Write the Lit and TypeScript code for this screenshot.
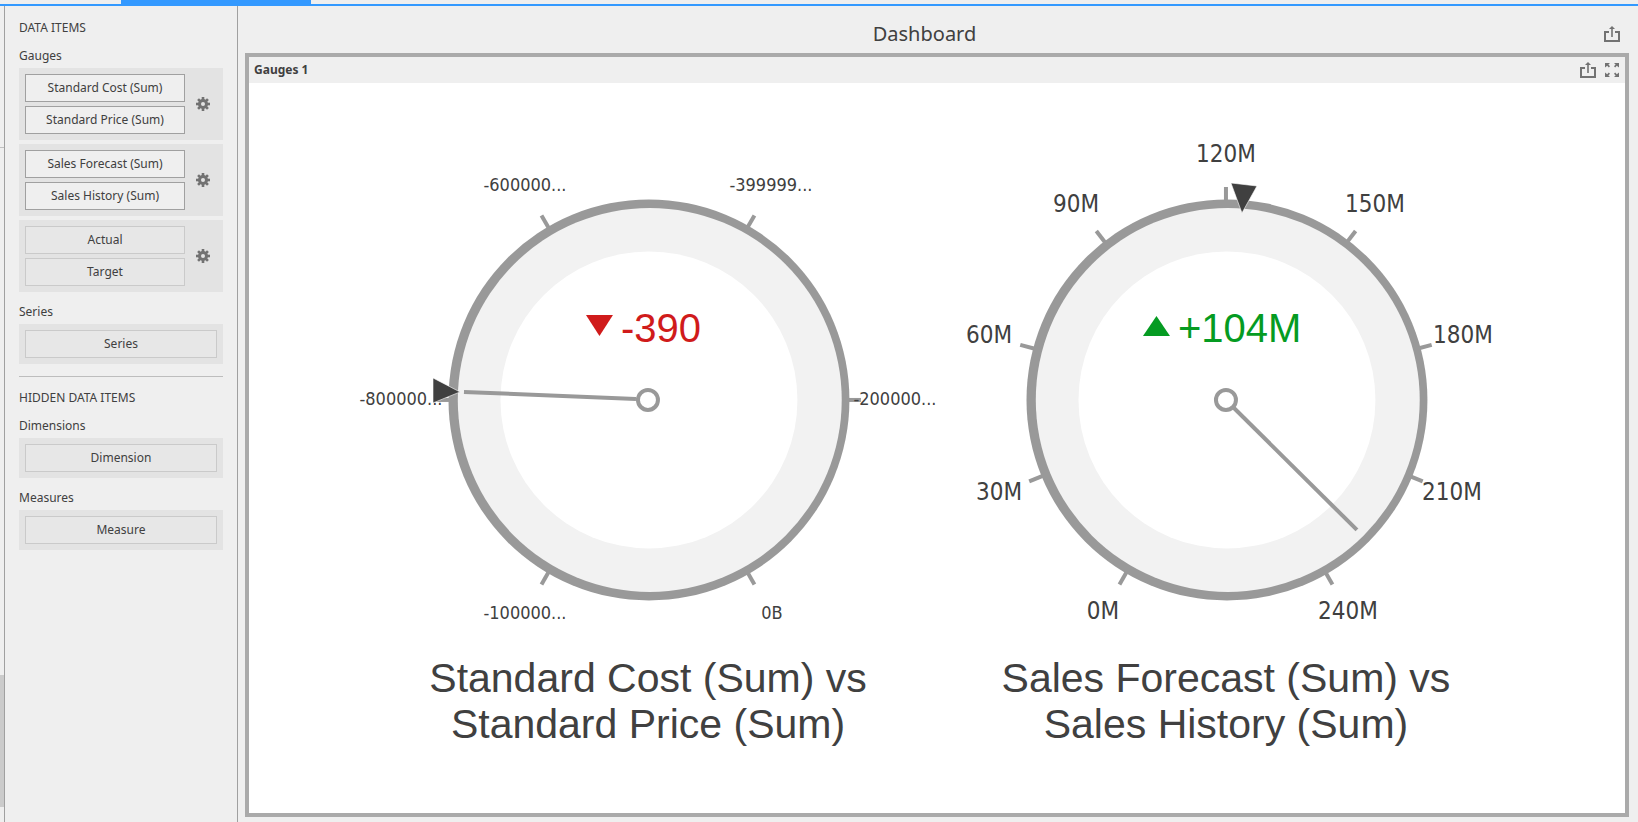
import { LitElement, html, svg, css } from "lit";
import { customElement, property } from "lit/decorators.js";

const UI_FONT = css`"Segoe UI", "Noto Sans", "Open Sans", sans-serif`;

interface Label { text: string; x: number; y: number; }
interface GaugeSpec {
  caption: string;
  delta: string;
  up: boolean;
  valueX: number;
  labelSize: string;
  ticks: number[];
  labels: Label[];
  needle: [number, number, number, number];
  marker: string;
}

// Centre of every dial inside the 578 x 488 drawing
const CX = 289;
const CY = 260;

const gauges: GaugeSpec[] = [
  {
    caption: "Standard Cost (Sum) vs Standard Price (Sum)",
    delta: "-390",
    up: false,
    valueX: 262,
    labelSize: "small",
    ticks: [-150, -90, -30, 30, 90, 150],
    labels: [
      { text: "-100000...", x: 166, y: 479 },
      { text: "-800000...", x: 42, y: 265 },
      { text: "-600000...", x: 166, y: 51 },
      { text: "-399999...", x: 412, y: 51 },
      { text: "-200000...", x: 536, y: 265 },
      { text: "0B", x: 413, y: 479 },
    ],
    needle: [277, 259, 105, 252],
    marker: "74,238 74,263 101,252",
  },
  {
    caption: "Sales Forecast (Sum) vs Sales History (Sum)",
    delta: "+104M",
    up: true,
    valueX: 241,
    labelSize: "large",
    ticks: [-150, -112.5, -75, -37.5, 0, 37.5, 75, 112.5, 150],
    labels: [
      { text: "0M", x: 166, y: 479 },
      { text: "30M", x: 62, y: 360 },
      { text: "60M", x: 52, y: 203 },
      { text: "90M", x: 139, y: 72 },
      { text: "120M", x: 289, y: 22 },
      { text: "150M", x: 438, y: 72 },
      { text: "180M", x: 526, y: 203 },
      { text: "210M", x: 515, y: 360 },
      { text: "240M", x: 411, y: 479 },
    ],
    needle: [297, 268, 420, 390],
    marker: "294,43 320,46 305,73",
  },
];

@customElement("delta-gauge")
export class DeltaGauge extends LitElement {
  @property({ attribute: false }) spec!: GaugeSpec;

  static styles = css`
    :host { display: block; flex: 1 1 0; min-width: 0; }
    .gauge { margin: 0; display: flex; flex-direction: column; }
    .dial { display: block; width: 100%; height: auto; overflow: visible; }
    .caption {
      margin-top: 27px; padding: 0 48px; text-align: center;
      font: 41px/46px "Liberation Sans", Arial, sans-serif; color: #404040;
    }
    .label {
      font-family: Tahoma, "DejaVu Sans Condensed", "Noto Sans", sans-serif;
      fill: #404040; text-anchor: middle;
    }
    .small { font-size: 18px; }
    .large { font-size: 24px; }
    .value { font: 40px "Liberation Sans", Arial, sans-serif; }
    .up { fill: #059b22; }
    .down { fill: #d01b1b; }
    .tick, .needle { stroke: #999; stroke-width: 4; }
    .rim { fill: #999; }
    .band { fill: #f2f2f2; }
    .face { fill: #fff; }
    .hub { fill: #fff; stroke: #999; stroke-width: 4; }
    .marker { fill: #404040; stroke: #fff; stroke-width: 1; stroke-opacity: 0.6; }
  `;

  render() {
    const g = this.spec;
    const tone = g.up ? "up" : "down";
    const left = g.up ? 206 : 227;
    const arrow = g.up
      ? `${left},196 ${left + 27},196 ${left + 13.5},176`
      : `${left},175 ${left + 27},175 ${left + 13.5},196`;
    return html`
      <figure class="gauge">
        <svg class="dial" viewBox="0 1 578 488" role="img" aria-label=${g.caption}>
          ${g.ticks.map((a) => svg`<line class="tick" x1=${CX} x2=${CX} y1=${CY - 213} y2=${CY - 195}
              transform="rotate(${a} ${CX} ${CY})"/>`)}
          <circle class="rim" cx="290" cy=${CY} r="200.5"/>
          <circle class="band" cx="290.8" cy=${CY} r="192"/>
          <circle class="face" cx="290" cy=${CY} r="148.5"/>
          ${g.labels.map((l) => svg`<text class="label ${g.labelSize}" x=${l.x} y=${l.y}>${l.text}</text>`)}
          <line class="needle" x1=${g.needle[0]} y1=${g.needle[1]} x2=${g.needle[2]} y2=${g.needle[3]}/>
          <circle class="hub" cx=${CX} cy=${CY} r="10"/>
          <polygon class="marker" points=${g.marker}/>
          <polygon class=${tone} points=${arrow}/>
          <text class="value ${tone}" x=${g.valueX} y="202">${g.delta}</text>
        </svg>
        <figcaption class="caption">${g.caption}</figcaption>
      </figure>
    `;
  }
}

const exportIcon = svg`<svg class="icon" viewBox="0 0 16 16" aria-hidden="true">
  <path d="M5 6H1v9h14V6h-4" fill="none" stroke="#727272" stroke-width="2"/>
  <path d="M8 11V2" fill="none" stroke="#727272" stroke-width="1.600"/>
  <path d="M8 0l3 3H5z" fill="#727272"/></svg>`;

const expandIcon = svg`<svg class="icon" viewBox="0 0 16 16" aria-hidden="true">
  <g fill="#727272">
    <path d="M1 1h5L4.400 2.600 6 4.200 4.800 5.400 3.200 3.800 1 5.500z"/>
    <path d="M15 1h-5l1.600 1.600L10 4.200l1.200 1.200 1.600-1.600L15 5.500z"/>
    <path d="M1 15h5l-1.600-1.600L6 11.800l-1.200-1.200-1.600 1.600L1 10.500z"/>
    <path d="M15 15h-5l1.600-1.600-1.600-1.600 1.200-1.200 1.600 1.600L15 10.500z"/>
  </g></svg>`;

const gearIcon = svg`<svg class="gear" viewBox="0 0 14 14" aria-hidden="true">
  <g fill="#727272">
    ${[0, 45, 90, 135].map((a) => svg`<rect x="5.700" y="0" width="2.600" height="14" transform="rotate(${a} 7 7)"/>`)}
    <circle cx="7" cy="7" r="5"/>
  </g>
  <circle cx="7" cy="7" r="2" fill="#e3e3e3"/></svg>`;

@customElement("app-root")
export class AppRoot extends LitElement {
  static styles = css`
    :host {
      display: flex; flex-direction: column; min-height: 100vh; box-sizing: border-box;
      background: #efefef; color: #404040; font: 12px/24px ${UI_FONT};
    }
    * { box-sizing: border-box; }
    button { font: inherit; color: inherit; margin: 0; cursor: pointer; }
    .tabs { height: 6px; border-bottom: 2px solid #3399ff; padding-left: 121px; }
    .tab { width: 190px; height: 4px; background: #3399ff; }
    .workspace { flex: 1; display: flex; }
    .rail { width: 5px; border-right: 1px solid #a0a0a0; display: flex; flex-direction: column; }
    .rail-line { height: 142px; border-bottom: 1px solid #c0c0c0; }
    .rail-space { flex: 1; }
    .thumb { height: 132px; background: #cbcbcb; margin-bottom: 15px; }
    .sidebar { width: 233px; padding: 10px 14px; border-right: 1px solid #a0a0a0; }
    h2, h3, h1 { margin: 0; font-size: 12px; font-weight: 400; }
    .section-title { margin-bottom: 4px; }
    .slots { display: flex; flex-direction: column; gap: 4px; margin-bottom: 8px; }
    .group { display: flex; background: #e3e3e3; padding: 6px; }
    .items { flex: 1; display: flex; flex-direction: column; gap: 4px; }
    .item {
      height: 28px; width: 100%; padding: 0; line-height: 24px;
      background: #efefef; border: 1px solid #a0a0a0;
    }
    .item.empty { background: #e7e7e7; border-color: #cacaca; }
    .options { width: 32px; border: 0; background: none; padding: 0 0 0 4px; display: grid; place-items: center; }
    .gear { display: block; width: 14px; height: 14px; }
    .divider { border: 0; border-top: 1px solid #bdbdbd; margin: 12px 0 9px; }
    .main { flex: 1; min-width: 0; display: flex; flex-direction: column; padding: 0 9px 5px 7px; }
    .title-bar { height: 47px; display: flex; align-items: center; padding: 8px 9px 0 0; }
    .title-bar h1 { flex: 1; text-align: center; font-size: 20px; line-height: 28px; }
    .icon-button { border: 0; background: none; padding: 0; display: block; width: 16px; height: 16px; }
    .icon { display: block; width: 16px; height: 16px; }
    .panel { flex: 1; display: flex; flex-direction: column; border: 4px solid #aaa; background: #fff; }
    .panel-head { height: 26px; display: flex; align-items: center; gap: 8px; padding: 0 5px; background: #efefef; }
    .panel-head h2 { flex: 1; font-weight: 700; }
    .gauges { flex: 1; display: flex; align-items: center; padding: 0 8% 8px; }
  `;

  private slot_(name: string, empty = false) {
    return html`<button class="item ${empty ? "empty" : ""}">${name}</button>`;
  }

  private group(names: string[], empty = false) {
    return html`<div class="group">
      <div class="items">${names.map((n) => this.slot_(n, empty))}</div>
      <button class="options" aria-label="Options">${gearIcon}</button>
    </div>`;
  }

  private single(title: string, name: string) {
    return html`<h3>${title}</h3>
      <div class="slots"><div class="group"><div class="items">${this.slot_(name, true)}</div></div></div>`;
  }

  render() {
    return html`
      <div class="tabs"><div class="tab"></div></div>
      <div class="workspace">
        <div class="rail"><div class="rail-line"></div><div class="rail-space"></div><div class="thumb"></div></div>
        <aside class="sidebar">
          <h2 class="section-title">DATA ITEMS</h2>
          <h3>Gauges</h3>
          <div class="slots">
            ${this.group(["Standard Cost (Sum)", "Standard Price (Sum)"])}
            ${this.group(["Sales Forecast (Sum)", "Sales History (Sum)"])}
            ${this.group(["Actual", "Target"], true)}
          </div>
          ${this.single("Series", "Series")}
          <hr class="divider" />
          <h2 class="section-title">HIDDEN DATA ITEMS</h2>
          ${this.single("Dimensions", "Dimension")}
          ${this.single("Measures", "Measure")}
        </aside>
        <main class="main">
          <header class="title-bar">
            <h1>Dashboard</h1>
            <button class="icon-button" aria-label="Export dashboard">${exportIcon}</button>
          </header>
          <section class="panel">
            <header class="panel-head">
              <h2>Gauges 1</h2>
              <button class="icon-button" aria-label="Export">${exportIcon}</button>
              <button class="icon-button" aria-label="Maximize">${expandIcon}</button>
            </header>
            <div class="gauges">
              ${gauges.map((g) => html`<delta-gauge .spec=${g}></delta-gauge>`)}
            </div>
          </section>
        </main>
      </div>
    `;
  }
}
